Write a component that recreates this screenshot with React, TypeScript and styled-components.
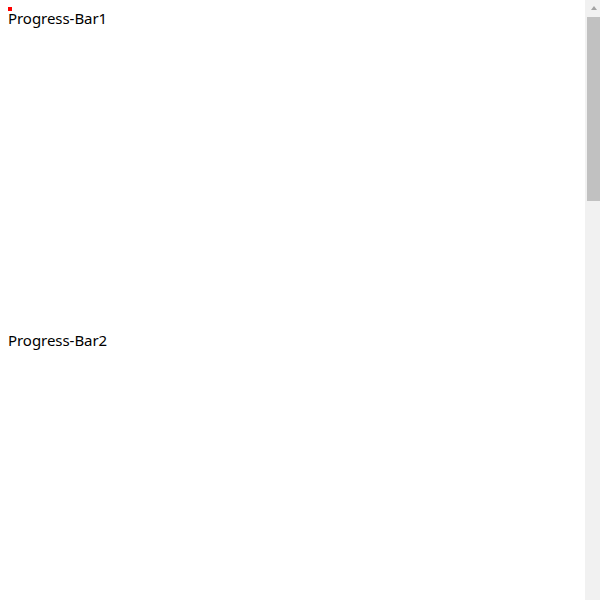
import React from 'react'
import styled, { createGlobalStyle } from 'styled-components'

const GlobalStyle = createGlobalStyle`
  html, body {
    margin: 0;
    background: #ffffff;
  }
  body {
    padding: 8px;
    font-family: "Noto Sans", "Liberation Sans", sans-serif;
    color: #000000;
  }
`

// drawn window scrollbar, pinned over the right edge
const ScrollBar = styled.div`
  position: fixed;
  top: 0;
  right: 0;
  width: 15px;
  height: 100vh;
  display: flex;
  flex-direction: column;
  background: #f1f1f1;
`

const ArrowButton = styled.div`
  height: 17px;
  display: flex;
  align-items: center;
  justify-content: center;
  padding-left: 2px;

  &::before {
    content: '';
    width: 0;
    height: 0;
    border-left: 3.5px solid transparent;
    border-right: 3.5px solid transparent;
    border-bottom: 4px solid #a3a3a3;
    margin-top: -2px;
  }
`

const Thumb = styled.div<{ $size: number }>`
  height: ${({ $size }) => $size}px;
  margin-left: 2px;
  background: #c1c1c1;
`

const Section = styled.section<{ $height: number }>`
  position: relative;
  height: ${({ $height }) => $height}px;
`

// thin bar sitting on top of the label
const Track = styled.div`
  position: absolute;
  top: -1px;
  left: 0;
  width: 100%;
  height: 4px;
`

const Fill = styled.div`
  height: 100%;
  background: #ff0000;
`

const Label = styled.div`
  font-size: 15px;
  line-height: 21px;
  letter-spacing: -0.05px;
`

type Bar = { name: string; value: number; height: number }

const bars: Bar[] = [
  { name: 'Progress-Bar1', value: 4, height: 322 },
  { name: 'Progress-Bar2', value: 0, height: 1508 },
]

export default function App() {
  return (
    <>
      <GlobalStyle />
      {bars.map((bar) => (
        <Section key={bar.name} $height={bar.height}>
          <Track>
            <Fill style={{ width: bar.value }} />
          </Track>
          <Label>{bar.name}</Label>
        </Section>
      ))}
      <ScrollBar>
        <ArrowButton />
        <Thumb $size={184} />
      </ScrollBar>
    </>
  )
}
